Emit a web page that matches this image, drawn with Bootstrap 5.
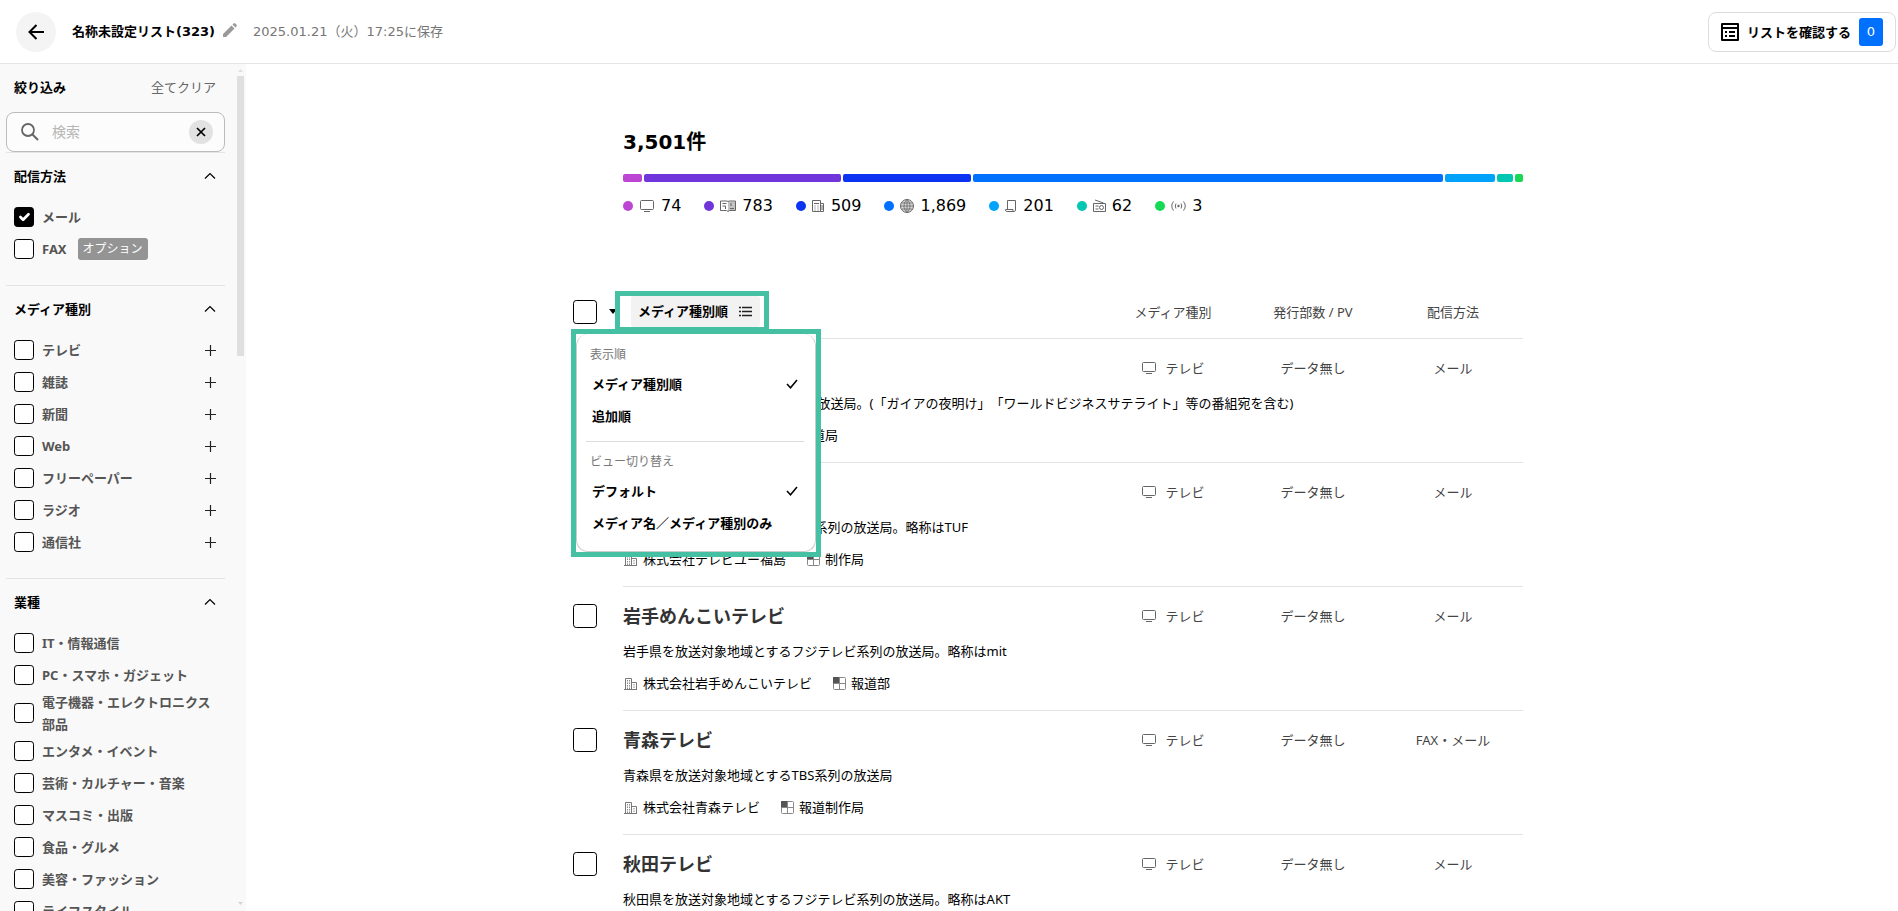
<!DOCTYPE html>
<html lang="ja">
<head>
<meta charset="utf-8">
<meta name="viewport" content="width=device-width, initial-scale=1">
<title>名称未設定リスト</title>
<link rel="stylesheet" href="https://cdn.jsdelivr.net/npm/bootstrap@5.3.0/dist/css/bootstrap.min.css">
<style>
  body { font: 13px/22px "Noto Sans", "Noto Sans CJK JP", sans-serif; color: #000; background: #fff; text-spacing-trim: space-all; }
  svg { flex: none; display: block; }
  button { color: inherit; }
  .digits { font-family: "DejaVu Sans", "Noto Sans CJK JP", sans-serif; }

  .app-header { height: 64px; border-bottom: 1px solid #e4e4e4; padding: 0 2px 0 16px; }
  .back-btn { width: 40px; height: 40px; background: #f4f4f4; }
  .list-title { font-size: 13px; line-height: 22px; }
  .saved-at { color: #767676; }
  .confirm-btn { height: 40px; border: 1px solid #dcdcdc; border-radius: 8px; padding: 0 12px; gap: 8px; background: #fff; }
  .confirm-count { width: 24px; height: 28px; line-height: 28px; border-radius: 3px; background: #0070ff; color: #fff; font-weight: 400; }

  .filter-panel { width: 246px; background: #f9f9f9; }
  .filter-body { padding: 0 10px 0 6px; }
  .filter-head, .section-head { height: 48px; padding: 0 9px 2px 8px; }
  .clear-link { color: #666; text-decoration: none; }
  .search-box { height: 40px; border: 1px solid #bbb; border-radius: 8px; background: #fcfcfc; padding: 0 11px 0 14px; }
  .search-box input { font-size: 14px; outline: 0; margin-left: 13px; }
  .search-box input::placeholder { color: #b5b5b5; }
  .clear-btn { width: 24px; height: 24px; background: #e2e2e2; }
  .filter-section { border-top: 1px solid #e4e4e4; padding-bottom: 20px; }
  .filter-row { min-height: 32px; padding: 0 9px 0 8px; gap: 8px; color: #555; font-weight: 700; }
  .filter-row label { flex: 1; }
  .filter-row .label-fit { flex: none; }
  .option-tag { background: #949494; color: #fff; border-radius: 3px; padding: 0 5px; margin-left: 3px; font-weight: 400; font-size: 12px; }
  .form-check-input { margin: 0; flex: none; width: 20px; height: 20px; border: 1px solid #000; border-radius: 4px; background-color: #fff; }
  .form-check-input:checked { background-color: #000; border-color: #000; }
  .check-lg { width: 24px; height: 24px; }
  .scroll-rail { width: 11px; padding: 5px 2px 6px; }
  .scroll-thumb { width: 7px; height: 280px; background: #dfdfdf; }

  .content-wrap { max-width: 1002px; padding: 63px 50px 0 2px; }
  .summary { margin: 0 0 67px 50px; }
  .total { font-size: 20px; line-height: 30px; margin-bottom: 17px; }
  .ratio-bar { gap: 2px; height: 8px; margin-bottom: 12px; }
  .ratio-bar div { min-width: 8px; border-radius: 2px; }
  .legend-row { gap: 23px; font-size: 16px; line-height: 24px; color: #000; }
  .legend-row li { gap: 6px; color: #000; }
  .legend-row svg { color: #666; }
  .dot { width: 10px; height: 10px; border-radius: 50%; }
  .c1 { background: #bd45d3; } .c2 { background: #7036db; } .c3 { background: #0c33f2; }
  .c4 { background: #0070ff; } .c5 { background: #00a3f9; } .c6 { background: #00c7b2; } .c7 { background: #16d956; }

  .media-table { width: 100%; table-layout: fixed; border-collapse: separate; border-spacing: 0; }
  .col-check { width: 50px; }
  .col-attr { width: 140px; }
  .media-table th { height: 54px; padding: 0; border-bottom: 1px solid #e2e2e2; font-weight: 400; color: #444; }
  .media-table td { height: 124px; padding: 17px 0 14px; vertical-align: top; white-space: nowrap; line-height: 24px; }
  .media-table td + td { border-bottom: 1px solid #e2e2e2; }
  .media-table .attr { color: #444; text-align: center; }
  .media-name { font-size: 18px; line-height: 24px; font-weight: 700; color: #333; margin-bottom: 11px; }
  .media-desc { margin-bottom: 8px; }
  .media-org { gap: 20px; }
  .media-org svg { margin-right: 4px; }
  .caret-btn { width: 18px; padding: 0 0 0 12px; overflow: visible; }

  .sort-control { border: 5px solid #45c0a2; background: #fff; padding: 0 4px 0 11px; z-index: 2; }
  .sort-btn { height: 31px; width: 129px; padding: 0 8px 1px 7px; background: #f2f2f2; border-radius: 3px; font-weight: 700; color: #000; }
  .sort-menu { position: absolute; top: 33px; left: -49px; width: 250px; border: 5px solid #45c0a2; background: #fff; color: #000; }
  .menu-card { border: 1px solid #ccc; border-width: 0 1px 1px; border-radius: 12px; padding: 8px 11px 12px 9px; }
  .menu-label { font-size: 12px; line-height: 26px; color: #777; padding-left: 4px; font-weight: 400; }
  .menu-item { height: 32px; padding: 0 6px; font-weight: 700; color: #000; }
  .menu-card hr { margin: 9px 0 7px; border-top: 1px solid #dcdcdc; opacity: 1; }
</style>
</head>
<body class="vh-100 overflow-hidden d-flex flex-column">

<svg width="0" height="0" class="position-absolute" aria-hidden="true">
  <symbol id="tv" viewBox="0 0 16 14"><path d="M2.500 1.500h11a1 1 0 0 1 1 1v7a1 1 0 0 1-1 1h-11a1 1 0 0 1-1-1v-7a1 1 0 0 1 1-1zM5 12.500h6" fill="none" stroke="#666"/></symbol>
  <symbol id="book" viewBox="0 0 16 14"><path d="M.5 2h6.500l1 .6 1-.6h6.500v9.500H9.500l-1.500 1-1.500-1H.5z" fill="none" stroke="currentColor"/><path d="M8 2.500h7.500v9H9l-1 1z" fill="currentColor" opacity=".4"/><path d="M2.500 4.500h4M2.500 7h3M5.500 7v3M11 4v3M10 9.500h4" fill="none" stroke="currentColor"/></symbol>
  <symbol id="paper" viewBox="0 0 13 14"><path d="M.5 1.500h8v11h-8zM8.500 4.500h3v8h-3M2 4.500h5M2.500 7h1M5.500 7h1M2.500 9h1M5.500 9h1M2.500 11h1M5.500 11h1M10 6v5" fill="none" stroke="currentColor"/></symbol>
  <symbol id="globe" viewBox="0 0 14 14"><circle cx="7" cy="7" r="6.500" fill="currentColor" fill-opacity=".25" stroke="currentColor"/><path d="M7 .5v13M.5 7h13M1.500 4h11M1.500 10h11M7 .5C3 4 3 10 7 13.500M7 .5c4 3.500 4 9.500 0 13" fill="none" stroke="currentColor" stroke-width=".8"/></symbol>
  <symbol id="scroll" viewBox="0 0 12 14"><path d="M2.500 10V1.500h8V11M.5 10.500h7.500v2H1.500q-1 0-1-2zM8 12.500h1.500q1 0 1-2" fill="none" stroke="currentColor"/></symbol>
  <symbol id="radio" viewBox="0 0 13 14"><path d="M.5 4.500h12v8H.5zM2 1l8.500 3M2.500 7h3M2.500 10h3" fill="none" stroke="currentColor"/><circle cx="8.500" cy="8.500" r="2" fill="none" stroke="currentColor"/></symbol>
  <symbol id="waves" viewBox="0 0 15 14"><circle cx="7.500" cy="7" r="1.200" fill="currentColor"/><path d="M5 4.500Q3.500 7 5 9.500M10 4.500Q11.500 7 10 9.500M2.500 2.500Q-1 7 2.500 11.500M12.500 2.500Q16 7 12.500 11.500" fill="none" stroke="currentColor"/></symbol>
  <symbol id="company" viewBox="0 0 16 15"><path d="M2.500 2.500h6v11h-6zM8.500 6.500h5v7h-5zM1 13.500h13" fill="none" stroke="#777"/><path d="M4.500 4v9M6.500 4v9M11 8v4" fill="none" stroke="#888" stroke-dasharray="1.500 1"/></symbol>
  <symbol id="dept" viewBox="0 0 15 15"><rect x="1.500" y="1.500" width="12" height="12" rx="1" fill="#fff" stroke="#888"/><path d="M1 1h6.500v6.500H1z" fill="#555"/><path d="M7.500 1.500v12M1.500 7.500h12" stroke="#888"/></symbol>
  <symbol id="up" viewBox="0 0 12 8"><path d="M1 6.500 6 1.500l5 5" fill="none" stroke="#000" stroke-width="1.200"/></symbol>
  <symbol id="plus" viewBox="0 0 11 11"><path d="M5.500 0v11M0 5.500h11" stroke="#222" stroke-width="1.200"/></symbol>
  <symbol id="tick" viewBox="0 0 12 10"><path d="m1 5 3.500 3.800L11 1" fill="none" stroke="#000" stroke-width="1.500"/></symbol>
</svg>

<header class="app-header d-flex align-items-center flex-shrink-0">
  <button class="btn p-0 border-0 back-btn rounded-circle d-flex align-items-center justify-content-center me-3" aria-label="戻る">
    <svg width="16" height="16" viewBox="0 0 16 16"><path d="M8.500 1 1.500 8l7 7M1.500 8H16" fill="none" stroke="#000" stroke-width="2"/></svg>
  </button>
  <h1 class="list-title digits m-0 fw-bold">名称未設定リスト(323)</h1>
  <button class="btn p-0 border-0 ms-2 me-3 mb-1" aria-label="名称を編集">
    <svg width="14" height="14" viewBox="0 0 14 14"><path d="M0 14v-3L8.500 2.500l3 3L3 14zM9.500 1.500 11 .3q.5-.5 1 0l1.700 1.700q.5.500 0 1L12.500 4.500z" fill="#999"/></svg>
  </button>
  <span class="saved-at digits">2025.01.21（火）17:25に保存</span>
  <button class="confirm-btn d-flex align-items-center ms-auto fw-bold">
    <svg width="18" height="18" viewBox="0 0 18 18"><path d="M1 1h16v16H1zM1 5h16" fill="none" stroke="#000" stroke-width="2" stroke-linejoin="round"/><path d="M4 9h2M8 9h6M4 13h2M8 13h6" stroke="#000" stroke-width="2"/></svg>
    <span>リストを確認する</span>
    <span class="confirm-count digits">0</span>
  </button>
</header>

<div class="d-flex flex-grow-1 overflow-hidden">
  <aside class="filter-panel d-flex flex-shrink-0 overflow-hidden">
    <div class="filter-body flex-grow-1">
      <div class="filter-head d-flex align-items-center justify-content-between">
        <strong>絞り込み</strong><a href="#" class="clear-link">全てクリア</a>
      </div>
      <div class="search-box d-flex align-items-center">
        <svg width="18" height="18" viewBox="0 0 18 18"><circle cx="7" cy="7" r="6" fill="none" stroke="#666" stroke-width="1.800"/><path d="m11.500 11.500 5.500 5.500" stroke="#666" stroke-width="2"/></svg>
        <input type="text" class="border-0 bg-transparent p-0 w-100" placeholder="検索" aria-label="検索">
        <button class="clear-btn btn border-0 p-0 rounded-circle d-flex align-items-center justify-content-center flex-shrink-0" aria-label="消去">
          <svg width="10" height="10" viewBox="0 0 10 10"><path d="m1 1 8 8M9 1 1 9" stroke="#000" stroke-width="1.700"/></svg>
        </button>
      </div>

      <section class="filter-section">
        <div class="section-head d-flex align-items-center justify-content-between"><strong>配信方法</strong><svg width="12" height="8"><use href="#up"/></svg></div>
        <div class="filter-row d-flex align-items-center"><input class="form-check-input" type="checkbox" id="f1" checked><label for="f1">メール</label></div>
        <div class="filter-row d-flex align-items-center"><input class="form-check-input" type="checkbox" id="f2"><label class="label-fit" for="f2">FAX</label><span class="option-tag">オプション</span></div>
      </section>

      <section class="filter-section">
        <div class="section-head d-flex align-items-center justify-content-between"><strong>メディア種別</strong><svg width="12" height="8"><use href="#up"/></svg></div>
        <div class="filter-row d-flex align-items-center"><input class="form-check-input" type="checkbox" id="m1"><label for="m1">テレビ</label><svg width="11" height="11"><use href="#plus"/></svg></div>
        <div class="filter-row d-flex align-items-center"><input class="form-check-input" type="checkbox" id="m2"><label for="m2">雑誌</label><svg width="11" height="11"><use href="#plus"/></svg></div>
        <div class="filter-row d-flex align-items-center"><input class="form-check-input" type="checkbox" id="m3"><label for="m3">新聞</label><svg width="11" height="11"><use href="#plus"/></svg></div>
        <div class="filter-row d-flex align-items-center"><input class="form-check-input" type="checkbox" id="m4"><label for="m4">Web</label><svg width="11" height="11"><use href="#plus"/></svg></div>
        <div class="filter-row d-flex align-items-center"><input class="form-check-input" type="checkbox" id="m5"><label for="m5">フリーペーパー</label><svg width="11" height="11"><use href="#plus"/></svg></div>
        <div class="filter-row d-flex align-items-center"><input class="form-check-input" type="checkbox" id="m6"><label for="m6">ラジオ</label><svg width="11" height="11"><use href="#plus"/></svg></div>
        <div class="filter-row d-flex align-items-center"><input class="form-check-input" type="checkbox" id="m7"><label for="m7">通信社</label><svg width="11" height="11"><use href="#plus"/></svg></div>
      </section>

      <section class="filter-section">
        <div class="section-head d-flex align-items-center justify-content-between"><strong>業種</strong><svg width="12" height="8"><use href="#up"/></svg></div>
        <div class="filter-row d-flex align-items-center"><input class="form-check-input" type="checkbox" id="g1"><label for="g1">IT・情報通信</label></div>
        <div class="filter-row d-flex align-items-center"><input class="form-check-input" type="checkbox" id="g2"><label for="g2">PC・スマホ・ガジェット</label></div>
        <div class="filter-row d-flex align-items-center"><input class="form-check-input" type="checkbox" id="g3"><label for="g3">電子機器・エレクトロニクス部品</label></div>
        <div class="filter-row d-flex align-items-center"><input class="form-check-input" type="checkbox" id="g4"><label for="g4">エンタメ・イベント</label></div>
        <div class="filter-row d-flex align-items-center"><input class="form-check-input" type="checkbox" id="g5"><label for="g5">芸術・カルチャー・音楽</label></div>
        <div class="filter-row d-flex align-items-center"><input class="form-check-input" type="checkbox" id="g6"><label for="g6">マスコミ・出版</label></div>
        <div class="filter-row d-flex align-items-center"><input class="form-check-input" type="checkbox" id="g7"><label for="g7">食品・グルメ</label></div>
        <div class="filter-row d-flex align-items-center"><input class="form-check-input" type="checkbox" id="g8"><label for="g8">美容・ファッション</label></div>
        <div class="filter-row d-flex align-items-center"><input class="form-check-input" type="checkbox" id="g9"><label for="g9">ライフスタイル</label></div>
      </section>
    </div>
    <div class="scroll-rail d-flex flex-column align-items-center flex-shrink-0" aria-hidden="true">
      <svg class="mb-1" width="5" height="3"><path d="M0 3 2.500 0 5 3z" fill="#dfdfdf"/></svg>
      <div class="scroll-thumb"></div>
      <svg class="mt-auto" width="5" height="3"><path d="M0 0h5L2.500 3z" fill="#d4d4d4"/></svg>
    </div>
  </aside>

  <main class="flex-grow-1 overflow-hidden">
    <div class="content-wrap mx-auto">
      <div class="summary">
        <h2 class="total digits fw-bold">3,501件</h2>
        <div class="ratio-bar d-flex">
          <div class="c1" style="flex:74 1 0"></div>
          <div class="c2" style="flex:783 1 0"></div>
          <div class="c3" style="flex:509 1 0"></div>
          <div class="c4" style="flex:1869 1 0"></div>
          <div class="c5" style="flex:201 1 0"></div>
          <div class="c6" style="flex:62 1 0"></div>
          <div class="c7" style="flex:3 1 0"></div>
        </div>
        <ul class="legend-row digits list-unstyled d-flex m-0">
          <li class="d-flex align-items-center"><span class="dot c1"></span><svg width="16" height="14"><use href="#tv"/></svg>74</li>
          <li class="d-flex align-items-center"><span class="dot c2"></span><svg width="16" height="14"><use href="#book"/></svg>783</li>
          <li class="d-flex align-items-center"><span class="dot c3"></span><svg width="13" height="14"><use href="#paper"/></svg>509</li>
          <li class="d-flex align-items-center"><span class="dot c4"></span><svg width="14" height="14"><use href="#globe"/></svg>1,869</li>
          <li class="d-flex align-items-center"><span class="dot c5"></span><svg width="12" height="14"><use href="#scroll"/></svg>201</li>
          <li class="d-flex align-items-center"><span class="dot c6"></span><svg width="13" height="14"><use href="#radio"/></svg>62</li>
          <li class="d-flex align-items-center"><span class="dot c7"></span><svg width="15" height="14"><use href="#waves"/></svg>3</li>
        </ul>
      </div>

      <table class="media-table">
        <colgroup><col class="col-check"><col><col class="col-attr"><col class="col-attr"><col class="col-attr"></colgroup>
        <thead>
          <tr>
            <th colspan="2">
              <div class="d-flex align-items-center">
                <input class="form-check-input check-lg" type="checkbox" aria-label="全て選択">
                <button class="caret-btn border-0 bg-transparent" aria-label="選択メニュー"><svg width="8" height="5"><path d="M0 0h8L4 5z"/></svg></button>
                <div class="sort-control position-relative">
                  <button class="sort-btn border-0 d-flex align-items-center justify-content-between">メディア種別順
                    <svg width="13" height="11" viewBox="0 0 13 11"><path d="M0 1.500h2M3 1.500h10M0 5.500h2M3 5.500h10M0 9.500h2M3 9.500h10" stroke="#222" stroke-width="1.300"/></svg>
                  </button>
                  <div class="sort-menu">
                    <div class="menu-card">
                      <div class="menu-label">表示順</div>
                      <button class="menu-item w-100 border-0 bg-transparent d-flex align-items-center justify-content-between">メディア種別順<svg width="12" height="10"><use href="#tick"/></svg></button>
                      <button class="menu-item w-100 border-0 bg-transparent text-start d-block">追加順</button>
                      <hr>
                      <div class="menu-label">ビュー切り替え</div>
                      <button class="menu-item w-100 border-0 bg-transparent d-flex align-items-center justify-content-between">デフォルト<svg width="12" height="10"><use href="#tick"/></svg></button>
                      <button class="menu-item w-100 border-0 bg-transparent text-start d-block">メディア名／メディア種別のみ</button>
                    </div>
                  </div>
                </div>
              </div>
            </th>
            <th class="text-center">メディア種別</th>
            <th class="text-center">発行部数 / PV</th>
            <th class="text-center">配信方法</th>
          </tr>
        </thead>
        <tbody>
          <tr>
            <td><input class="form-check-input check-lg d-block" type="checkbox" aria-label="テレビ東京"></td>
            <td><h3 class="media-name">テレビ東京</h3><p class="media-desc">東京都などを対象とするテレビの放送局。(「ガイアの夜明け」「ワールドビジネスサテライト」等の番組宛を含む)</p>
              <div class="media-org d-flex"><span class="d-flex align-items-center"><svg width="16" height="15"><use href="#company"/></svg>株式会社テレビ東京</span><span class="d-flex align-items-center"><svg width="15" height="15"><use href="#dept"/></svg>報道局</span></div></td>
            <td class="attr"><span class="d-flex align-items-center justify-content-center gap-2"><svg width="16" height="14"><use href="#tv"/></svg>テレビ</span></td><td class="attr">データ無し</td><td class="attr">メール</td>
          </tr>
          <tr>
            <td><input class="form-check-input check-lg d-block" type="checkbox" aria-label="テレビユー福島"></td>
            <td><h3 class="media-name">テレビユー福島</h3><p class="media-desc">福島県を放送対象地域とするTBS系列の放送局。略称はTUF</p>
              <div class="media-org d-flex"><span class="d-flex align-items-center"><svg width="16" height="15"><use href="#company"/></svg>株式会社テレビユー福島</span><span class="d-flex align-items-center"><svg width="15" height="15"><use href="#dept"/></svg>制作局</span></div></td>
            <td class="attr"><span class="d-flex align-items-center justify-content-center gap-2"><svg width="16" height="14"><use href="#tv"/></svg>テレビ</span></td><td class="attr">データ無し</td><td class="attr">メール</td>
          </tr>
          <tr>
            <td><input class="form-check-input check-lg d-block" type="checkbox" aria-label="岩手めんこいテレビ"></td>
            <td><h3 class="media-name">岩手めんこいテレビ</h3><p class="media-desc">岩手県を放送対象地域とするフジテレビ系列の放送局。略称はmit</p>
              <div class="media-org d-flex"><span class="d-flex align-items-center"><svg width="16" height="15"><use href="#company"/></svg>株式会社岩手めんこいテレビ</span><span class="d-flex align-items-center"><svg width="15" height="15"><use href="#dept"/></svg>報道部</span></div></td>
            <td class="attr"><span class="d-flex align-items-center justify-content-center gap-2"><svg width="16" height="14"><use href="#tv"/></svg>テレビ</span></td><td class="attr">データ無し</td><td class="attr">メール</td>
          </tr>
          <tr>
            <td><input class="form-check-input check-lg d-block" type="checkbox" aria-label="青森テレビ"></td>
            <td><h3 class="media-name">青森テレビ</h3><p class="media-desc">青森県を放送対象地域とするTBS系列の放送局</p>
              <div class="media-org d-flex"><span class="d-flex align-items-center"><svg width="16" height="15"><use href="#company"/></svg>株式会社青森テレビ</span><span class="d-flex align-items-center"><svg width="15" height="15"><use href="#dept"/></svg>報道制作局</span></div></td>
            <td class="attr"><span class="d-flex align-items-center justify-content-center gap-2"><svg width="16" height="14"><use href="#tv"/></svg>テレビ</span></td><td class="attr">データ無し</td><td class="attr">FAX・メール</td>
          </tr>
          <tr>
            <td><input class="form-check-input check-lg d-block" type="checkbox" aria-label="秋田テレビ"></td>
            <td><h3 class="media-name">秋田テレビ</h3><p class="media-desc">秋田県を放送対象地域とするフジテレビ系列の放送局。略称はAKT</p></td>
            <td class="attr"><span class="d-flex align-items-center justify-content-center gap-2"><svg width="16" height="14"><use href="#tv"/></svg>テレビ</span></td><td class="attr">データ無し</td><td class="attr">メール</td>
          </tr>
        </tbody>
      </table>
    </div>
  </main>
</div>
<script src="https://cdn.jsdelivr.net/npm/bootstrap@5.3.0/dist/js/bootstrap.bundle.min.js"></script>
</body>
</html>
